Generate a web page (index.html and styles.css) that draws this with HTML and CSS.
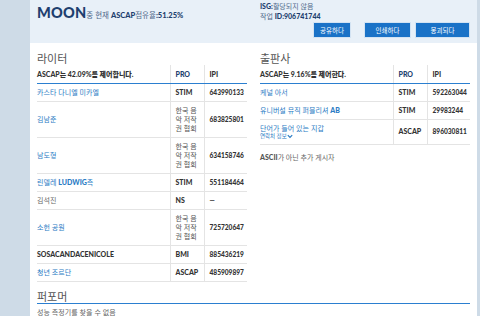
FILE: index.html
```html
<!DOCTYPE html>
<html lang="ko">
<head>
<meta charset="utf-8">
<title>MOON</title>
<link rel="stylesheet" href="styles.css">
</head>
<body>
<div class="page">
  <header class="header">
    <div class="hleft">
      <span class="title">MOON</span><span class="sub">중 현재 <b>ASCAP</b>점유율<b>:51.25%</b></span>
    </div>
    <div class="hright">
      <div class="meta"><b>ISG:</b>할당되지 않음</div>
      <div class="meta">작업 <b>ID:906741744</b></div>
      <div class="btns">
        <button class="btn b1">공유하다</button>
        <button class="btn b2">인쇄하다</button>
        <button class="btn b3">몽괴되다</button>
      </div>
    </div>
  </header>

  <main class="main">
    <section class="col">
      <h2 class="sec">라이터</h2>
      <table class="tbl">
        <thead>
          <tr><th class="name">ASCAP는 42.09%를 제어합니다.</th><th class="pro">PRO</th><th class="ipi">IPI</th></tr>
        </thead>
        <tbody>
          <tr><td class="name"><a>카스타 다니엘 미카엘</a></td><td class="pro b">STIM</td><td class="ipi">643990133</td></tr>
          <tr><td class="name"><a>김남준</a></td><td class="pro">한국 음악 저작권 협회</td><td class="ipi">683825801</td></tr>
          <tr><td class="name"><a>남도형</a></td><td class="pro">한국 음악 저작권 협회</td><td class="ipi">634158746</td></tr>
          <tr><td class="name"><a>린델레 <b>LUDWIG</b>측</a></td><td class="pro b">STIM</td><td class="ipi">551184464</td></tr>
          <tr><td class="name plain">김석진</td><td class="pro b">NS</td><td class="ipi">—</td></tr>
          <tr><td class="name"><a>소헌 공원</a></td><td class="pro">한국 음악 저작권 협회</td><td class="ipi">725720647</td></tr>
          <tr><td class="name dark">SOSACANDACENICOLE</td><td class="pro b">BMI</td><td class="ipi">885436219</td></tr>
          <tr><td class="name"><a>청년 조르단</a></td><td class="pro b">ASCAP</td><td class="ipi">485909897</td></tr>
        </tbody>
      </table>
    </section>

    <section class="col">
      <h2 class="sec">출판사</h2>
      <table class="tbl">
        <thead>
          <tr><th class="name">ASCAP는 9.16%를 제어한다.</th><th class="pro">PRO</th><th class="ipi">IPI</th></tr>
        </thead>
        <tbody>
          <tr><td class="name"><a>케널 아서</a></td><td class="pro b">STIM</td><td class="ipi">592263044</td></tr>
          <tr><td class="name"><a>유니버설 뮤직 퍼블리셔 <b>AB</b></a></td><td class="pro b">STIM</td><td class="ipi">29983244</td></tr>
          <tr><td class="name"><a>단어가 들어 있는 지갑</a><div class="contact">연락처 정보<svg width="6" height="5" viewBox="0 0 6 5"><path d="M0.8 1.2 L3 3.5 L5.2 1.2" fill="none" stroke="#2a7bc4" stroke-width="1.2"/></svg></div></td><td class="pro b">ASCAP</td><td class="ipi">896030811</td></tr>
        </tbody>
      </table>
      <p class="note"><b>ASCII</b>가 아닌 추가 게시자</p>
    </section>
  </main>

  <section class="perf">
    <h2 class="sec line">퍼포머</h2>
    <p class="none">성능 측정기를 찾을 수 없음</p>
  </section>
</div>
</body>
</html>
```

FILE: styles.css
```css
* { box-sizing: border-box; }
html, body { margin: 0; padding: 0; }
body {
  background: #cedbe7;
  font-family: Lato, "Noto Sans CJK KR", sans-serif;
  color: #333;
  font-size: 7px;
  width: 480px;
  height: 316px;
  overflow: hidden;
}
.page {
  margin: 0 3px 0 30px;
  background: #fff;
  height: 316px;
}
.header {
  background: #e8f0f8;
  height: 43px;
  display: flex;
  padding: 0 7px;
}
.hleft { width: 223px; padding-top: 4px; }
.title {
  font-size: 14.5px;
  font-weight: 900;
  color: #1e3f6f;
  letter-spacing: 0.2px;
}
.sub { font-size: 7.5px; color: #50698a; }
.sub b { color: #1e3f6f; font-weight: 900; }
.hright { flex: 1; padding-top: 2px; }
.meta { font-size: 7px; line-height: 9.5px; color: #50698a; }
.meta b { color: #1e3f6f; font-weight: 900; }
.btns { display: flex; margin-top: 1px; padding-left: 53px; }
.btn {
  height: 16px;
  border: 1px solid #d3e3f3;
  background: #1a72c7;
  color: #fff;
  font-family: "Noto Sans CJK KR", sans-serif;
  font-size: 6.5px;
  padding: 0;
}
.b1 { width: 38px; margin-right: 13px; }
.b2 { width: 47px; margin-right: 4px; }
.b3 { width: 55px; }

.main { display: flex; gap: 13px; padding: 0 7px; }
.col { width: 210px; }
.sec {
  margin: 0;
  padding-top: 8px;
  font-size: 11px;
  line-height: 14px;
  font-weight: 400;
  color: #555;
  font-family: "Noto Sans CJK KR", sans-serif;
}
.tbl { width: 210px; border-collapse: collapse; table-layout: fixed; }
.tbl th {
  text-align: left;
  font-weight: 900;
  font-size: 7px;
  color: #333;
  height: 18px;
  border-bottom: 1.5px solid #2b7fd0;
  padding: 0;
}
.tbl th.pro, .tbl th.ipi { padding-left: 5px; border-left: 1px solid #e4e4e4; }
.tbl th.pro { color: #1e3f6f; }
.tbl td {
  font-size: 7px;
  line-height: 9px;
  padding: 4px 0;
  border-bottom: 1px solid #e4e4e4;
  vertical-align: middle;
  color: #555;
}
.tbl td.pro, .tbl td.ipi { padding-left: 5px; border-left: 1px solid #e4e4e4; }
.tbl td.pro { padding-right: 3px; }
.tbl .name { width: 133px; }
.tbl .pro { width: 34px; }
.tbl .ipi { width: 43px; }
.tbl td.b { font-weight: 900; color: #333; }
.tbl td.ipi { font-weight: 900; color: #333; font-size: 6.6px; }
.tbl a { color: #2a7bc4; font-family: "Noto Sans CJK KR", sans-serif; }
.tbl a b { font-family: Lato, sans-serif; font-weight: 900; }
.tbl td.plain { color: #666; }
.tbl td.dark { font-weight: 900; color: #333; }
.contact { font-size: 5.5px; line-height: 7px; color: #2a7bc4; }
.contact svg { vertical-align: middle; }
.note { margin: 7px 0 0; color: #666; font-size: 7px; }
.note b { font-weight: 900; color: #555; }

.perf { padding: 0 7px; margin-top: 0; }
.sec.line {
  padding-top: 7px;
  border-bottom: 1.5px solid #2b7fd0;
  line-height: 14px;
}
.none { margin: 3px 0 0; font-size: 7px; color: #666; font-family: "Noto Sans CJK KR", sans-serif; }
```
